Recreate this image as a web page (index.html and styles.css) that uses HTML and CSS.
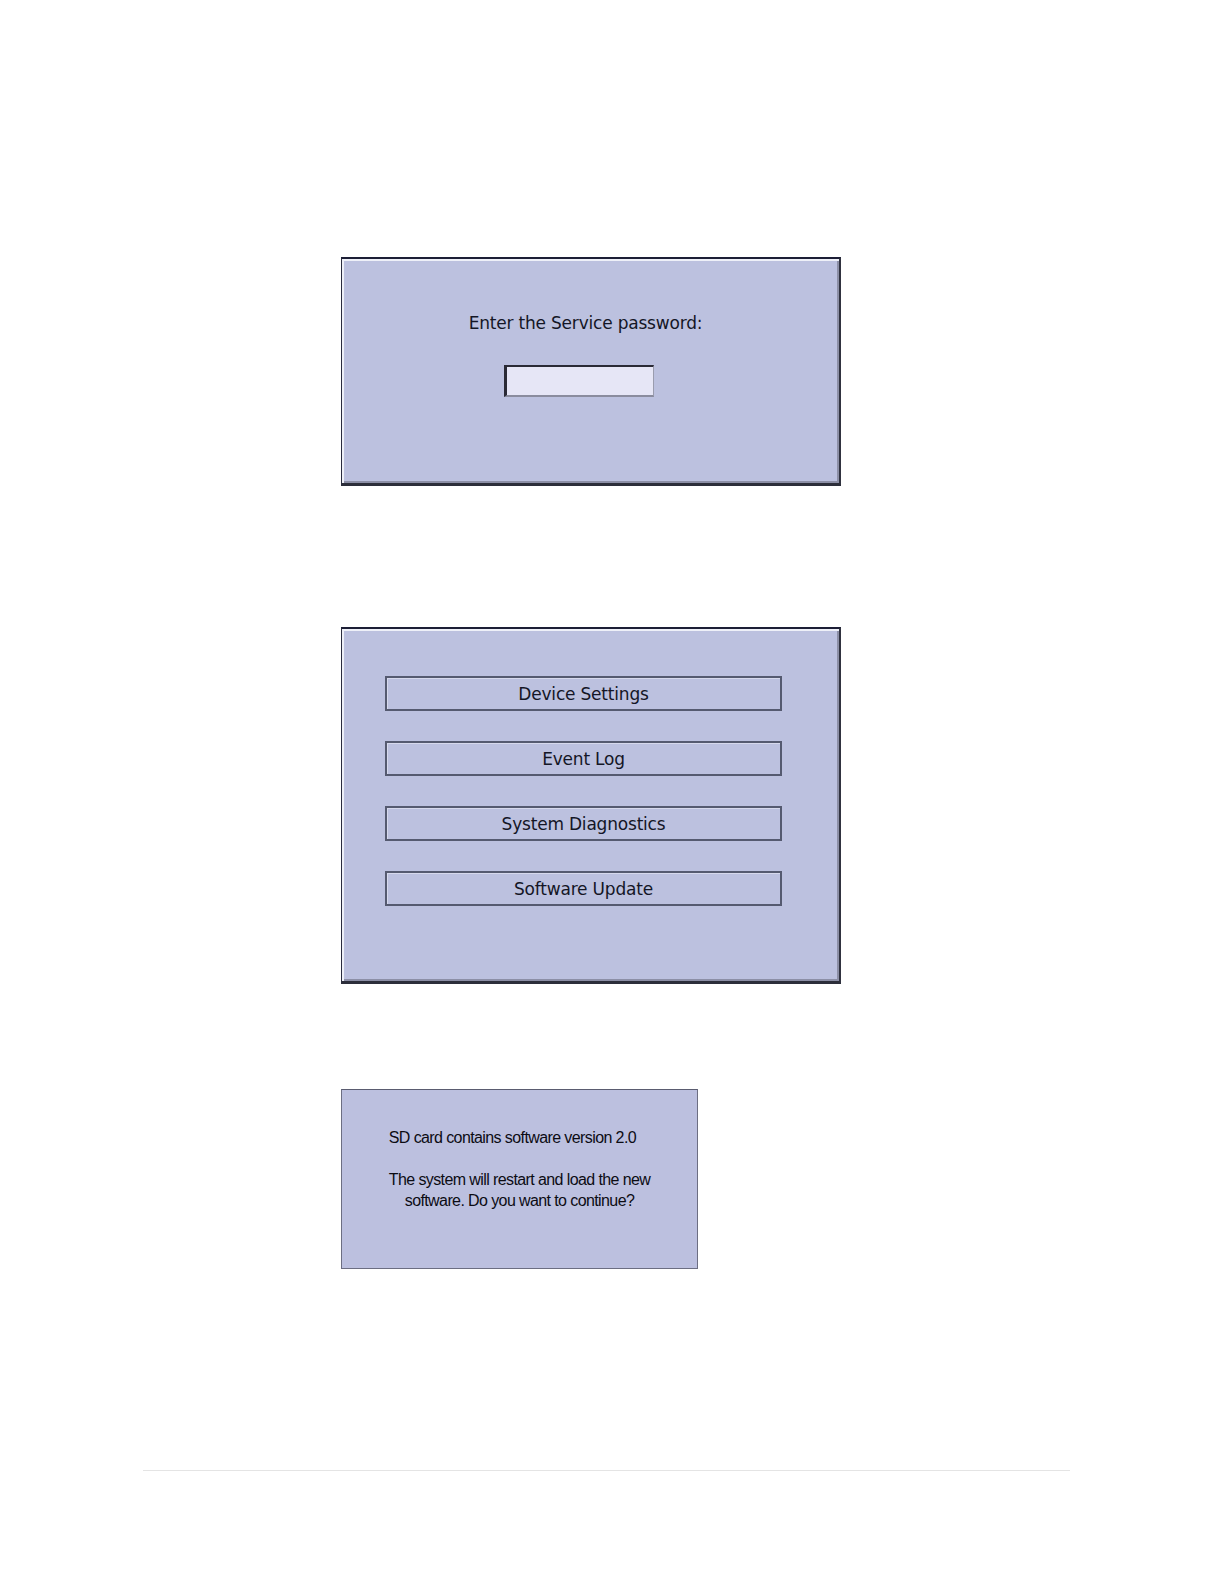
FILE: index.html
```html
<!DOCTYPE html>
<html>
<head>
<meta charset="utf-8">
<link rel="stylesheet" href="styles.css">
</head>
<body>
<div class="page">
  <div class="panel panel-login">
    <div class="login-label">Enter the Service password:</div>
    <div class="password-field"></div>
  </div>

  <div class="panel panel-menu">
    <div class="menu-btn">Device Settings</div>
    <div class="menu-btn">Event Log</div>
    <div class="menu-btn">System Diagnostics</div>
    <div class="menu-btn">Software Update</div>
  </div>

  <div class="panel-msg">
    <div class="msg-text">
      <p class="msg-line msg-first">SD card contains software version 2.0</p>
      <p class="msg-line msg-body">The system will restart and load the new<br>software. Do you want to continue?</p>
    </div>
  </div>

  <div class="footer-rule"></div>
</div>
</body>
</html>
```

FILE: styles.css
```css
html, body {
  margin: 0;
  padding: 0;
  background: #ffffff;
}

.page {
  width: 1224px;
  height: 1584px;
  box-sizing: border-box;
  padding-top: 257px;
  display: flex;
  flex-direction: column;
}

.panel {
  margin-left: 341px;
  width: 500px;
  box-sizing: border-box;
  background: #bcc1df;
  border-top: 2px solid #1c1e36;
  border-left: 1px solid #2a2c3e;
  border-right: 2px solid #30323f;
  border-bottom: 3px solid #2c2e3a;
  box-shadow: inset 2px 2px 0 #eef0f8, inset -2px -2px 0 #8c8fa6;
  font-family: "DejaVu Sans", Verdana, sans-serif;
  color: #141626;
}

.panel-login {
  height: 229px;
  display: flex;
  flex-direction: column;
  align-items: center;
  padding-top: 53px;
  padding-right: 10px;
}

.login-label {
  font-size: 17px;
  line-height: 22px;
  letter-spacing: -0.2px;
}

.password-field {
  margin-top: 31px;
  margin-right: 14px;
  width: 150px;
  height: 32px;
  box-sizing: border-box;
  background: #e6e6f6;
  border-top: 2px solid #2a2a36;
  border-left: 3px solid #2a2a36;
  border-right: 1px solid #9a9cae;
  border-bottom: 2px solid #8a8c9e;
}

.panel-menu {
  margin-top: 141px;
  height: 357px;
  padding-top: 47px;
  padding-left: 43px;
  display: flex;
  flex-direction: column;
  gap: 30px;
}

.menu-btn {
  width: 397px;
  height: 35px;
  box-sizing: border-box;
  border: 2px solid #555a70;
  box-shadow: inset 1px 1px 0 #d6d9ec;
  display: flex;
  align-items: center;
  justify-content: center;
  font-size: 17px;
  letter-spacing: -0.2px;
}

.panel-msg {
  margin-top: 105px;
  margin-left: 341px;
  width: 357px;
  height: 180px;
  box-sizing: border-box;
  background: #bcc0df;
  border: 1px solid #6c6e82;
  border-top-color: #5a5c70;
  display: flex;
  justify-content: center;
}

.msg-text {
  margin-top: 37px;
  font-family: "Liberation Sans", Arial, sans-serif;
  font-size: 16px;
  line-height: 21px;
  letter-spacing: -0.6px;
  color: #0c0c14;
  display: flex;
  flex-direction: column;
  gap: 21px;
}

.msg-line {
  margin: 0;
}

.msg-first {
  text-align: left;
}

.msg-body {
  text-align: center;
}

.footer-rule {
  margin-top: 201px;
  margin-left: 143px;
  width: 927px;
  height: 1px;
  background: #e4e4e4;
}
```
